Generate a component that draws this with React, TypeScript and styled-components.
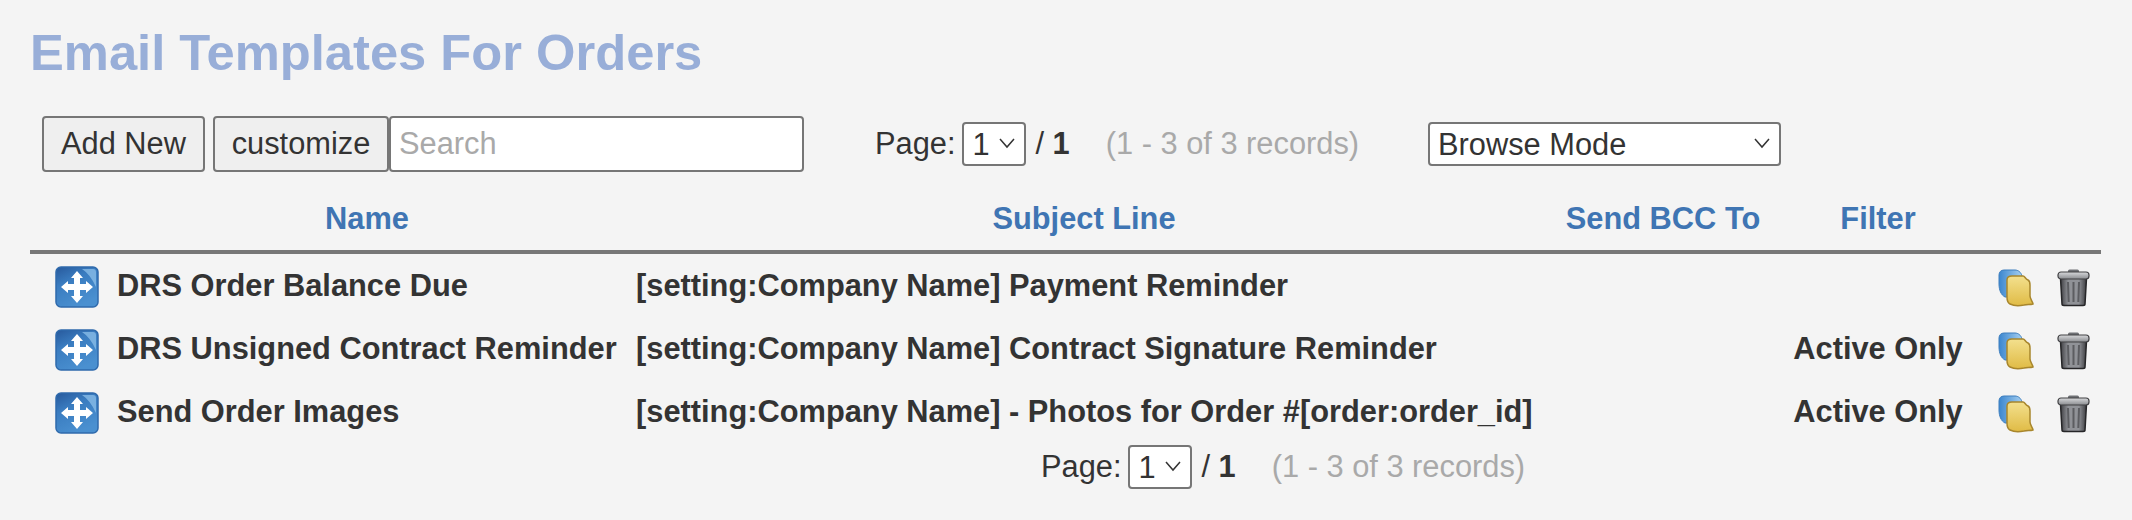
import { FC } from 'react';
import styled, { createGlobalStyle } from 'styled-components';

const GlobalStyle = createGlobalStyle`
    html, body {
        margin: 0;
        padding: 0;
        background: #f4f4f4;
    }
    body {
        font-family: "Liberation Sans", Arial, sans-serif;
        color: #333333;
    }
`;

const Page = styled.div`
    width: 2132px;
    height: 520px;
    box-sizing: border-box;
    padding: 0 31px 0 30px;
    overflow: hidden;
`;

const Title = styled.h1`
    margin: 0;
    padding-top: 24px;
    height: 92px;
    box-sizing: border-box;
    font-size: 50.7px;
    line-height: 58px;
    font-weight: 700;
    color: #98aed8;
`;

const Toolbar = styled.div`
    display: flex;
    align-items: center;
    height: 56px;
    padding-left: 12px;
    margin-top: 24px;
`;

const Button = styled.button<{ $width: number; $gap?: number }>`
    width: ${p => p.$width}px;
    height: 56px;
    margin-right: ${p => p.$gap ?? 0}px;
    padding: 0;
    box-sizing: border-box;
    background: #efefef;
    border: 2px solid #767676;
    border-radius: 4px;
    font-family: inherit;
    font-size: 30.8px;
    color: #333333;
`;

const SearchInput = styled.input`
    width: 415px;
    height: 56px;
    box-sizing: border-box;
    padding: 0 8px;
    background: #ffffff;
    border: 2px solid #767676;
    border-radius: 4px;
    font-family: inherit;
    font-size: 30.8px;
    color: #333333;
    &::placeholder {
        color: #a9a9a9;
        opacity: 1;
    }
`;

const Pager = styled.div<{ $left: number }>`
    display: flex;
    align-items: center;
    height: 44px;
    margin-left: ${p => p.$left}px;
    font-size: 30.8px;
`;

const TopPager = styled(Pager)`
    flex: none;
    width: 553px;
`;

const BottomPager = styled(Pager)`
    margin-top: 2px;
`;

const SelectBox = styled.div<{ $width: number }>`
    position: relative;
    width: ${p => p.$width}px;
    height: 44px;
    flex: none;
`;

const NativeSelect = styled.select`
    display: block;
    width: 100%;
    height: 100%;
    box-sizing: border-box;
    padding: 0 0 0 8px;
    appearance: none;
    background: #ffffff;
    border: 2px solid #767676;
    border-radius: 4px;
    font-family: inherit;
    font-size: 30.8px;
    color: #333333;
`;

const Chevron = styled.svg`
    position: absolute;
    right: 10px;
    top: 15px;
    width: 18px;
    height: 12px;
    pointer-events: none;
`;

const PageLabel = styled.span`
    margin-right: 7px;
`;

const PageTotal = styled.span`
    margin-left: 9px;
`;

const PageCount = styled.strong`
    font-weight: 700;
`;

const Records = styled.span`
    margin-left: 36px;
    color: #a9a9a9;
`;

const Table = styled.table`
    width: 2071px;
    margin-top: 17px;
    table-layout: fixed;
    border-collapse: collapse;
`;

const Column = styled.col<{ $width: number }>`
    width: ${p => p.$width}px;
`;

const HeadCell = styled.th`
    height: 63px;
    padding: 0 0 2px;
    box-sizing: border-box;
    border-bottom: 4px solid #777777;
    font-size: 30.8px;
    font-weight: 700;
    text-align: center;
    color: #3f75b3;
`;

const Cell = styled.td`
    height: 63px;
    padding: 0;
    font-size: 30.8px;
    font-weight: 700;
    white-space: nowrap;
    color: #333333;
`;

const SubjectCell = styled(Cell)`
    padding-left: 12px;
`;

const NameCell = styled(Cell)`
    padding-left: 7px;
`;

const FilterCell = styled(Cell)`
    text-align: center;
`;

const Icons = styled.div<{ $left: number; $top: number; $gap?: number }>`
    display: flex;
    align-items: center;
    padding: ${p => p.$top}px 0 0 ${p => p.$left}px;
    gap: ${p => p.$gap ?? 0}px;
`;

const IconSvg = styled.svg`
    display: block;
    flex: none;
    filter: blur(0.7px);
`;

const MoveIcon: FC<{ id: string }> = ({ id }) => (
    <IconSvg width="44" height="42" viewBox="0 0 44 42">
        <defs>
            <linearGradient id={`move-${id}`} x1="0" y1="0" x2="0.5" y2="1">
                <stop offset="0" stopColor="#27599c" />
                <stop offset="0.4" stopColor="#3a7cc0" />
                <stop offset="1" stopColor="#4a90d0" />
            </linearGradient>
        </defs>
        <rect x="1" y="1" width="42" height="40" rx="5" fill={`url(#move-${id})`} stroke="#2f6aac" strokeWidth="1.500" />
        <path d="M27 3h11a3 3 0 0 1 3 3v15q-6-13-14-18z" fill="#93c5ec" opacity="0.7" />
        <path
            d="M22 5l6 7h-3v6h6v-3l7 6-7 6v-3h-6v6h3l-6 7-6-7h3v-6h-6v3l-7-6 7-6v3h6v-6h-3z"
            fill="#ffffff"
        />
    </IconSvg>
);

const CopyIcon: FC<{ id: string }> = ({ id }) => (
    <IconSvg width="36" height="38" viewBox="0 0 36 38">
        <defs>
            <linearGradient id={`copy-b-${id}`} x1="0" y1="0" x2="1" y2="0">
                <stop offset="0" stopColor="#3b86cf" />
                <stop offset="1" stopColor="#a5cff0" />
            </linearGradient>
            <linearGradient id={`copy-y-${id}`} x1="0" y1="0" x2="0" y2="1">
                <stop offset="0" stopColor="#f3e08e" />
                <stop offset="1" stopColor="#e0bb45" />
            </linearGradient>
        </defs>
        <path
            d="M6 1h11c3 0 6 2 7 6v21H7c-4-2-6-7-6-13V6c0-3 2-5 5-5z"
            fill={`url(#copy-b-${id})`}
            stroke="#3f7fbe"
        />
        <path
            d="M9 11c0-3 2-4 5-4h11c2 0 2 3 5 4 2 1 2 3 2 5v11c0 3 3 6 3 8-3 1-6 0-9 1-5 1-10 1-14-1-2-1-3-4-3-7z"
            fill={`url(#copy-y-${id})`}
            stroke="#a8862c"
            strokeWidth="1.500"
        />
    </IconSvg>
);

const TrashIcon: FC<{ id: string }> = ({ id }) => (
    <IconSvg width="33" height="38" viewBox="0 0 33 38">
        <defs>
            <linearGradient id={`trash-${id}`} x1="0" y1="0" x2="1" y2="0">
                <stop offset="0" stopColor="#3f3f43" />
                <stop offset="0.3" stopColor="#909297" />
                <stop offset="0.7" stopColor="#909297" />
                <stop offset="1" stopColor="#3c3c40" />
            </linearGradient>
            <linearGradient id={`lid-${id}`} x1="0" y1="0" x2="0" y2="1">
                <stop offset="0" stopColor="#d8d9db" />
                <stop offset="1" stopColor="#8a8c90" />
            </linearGradient>
        </defs>
        <rect x="11" y="0.500" width="11" height="4" rx="1.500" fill="#6e7074" />
        <path d="M3.500 9h26l-1.500 26c0 1-1 1.500-2 1.500H7c-1 0-2-.5-2-1.500z" fill={`url(#trash-${id})`} stroke="#262628" strokeWidth="1.500" />
        <path d="M11 13l.7 20M16.500 13v20M22 13l-.7 20" stroke="#5c5d61" strokeWidth="2" fill="none" />
        <rect x="1" y="3" width="31" height="7" rx="3" fill={`url(#lid-${id})`} stroke="#404043" strokeWidth="1.200" />
    </IconSvg>
);

const ChevronDown: FC = () => (
    <Chevron viewBox="0 0 18 12">
        <path d="M2 2l7 8 7-8" fill="none" stroke="#333333" strokeWidth="1.500" />
    </Chevron>
);

const PageSelect: FC = () => (
    <SelectBox $width={64}>
        <NativeSelect defaultValue="1">
            <option value="1">1</option>
        </NativeSelect>
        <ChevronDown />
    </SelectBox>
);

const PagerContent: FC = () => (
    <>
        <PageLabel>Page:</PageLabel>
        <PageSelect />
        <PageTotal>/ <PageCount>1</PageCount></PageTotal>
        <Records>(1 - 3 of 3 records)</Records>
    </>
);

const rows = [
    { id: 'balance', name: 'DRS Order Balance Due', subject: '[setting:Company Name] Payment Reminder', filter: '' },
    { id: 'contract', name: 'DRS Unsigned Contract Reminder', subject: '[setting:Company Name] Contract Signature Reminder', filter: 'Active Only' },
    { id: 'images', name: 'Send Order Images', subject: '[setting:Company Name] - Photos for Order #[order:order_id]', filter: 'Active Only' },
];

const App: FC = () => (
    <Page>
        <GlobalStyle />
        <Title>Email Templates For Orders</Title>
        <Toolbar>
            <Button $width={163} $gap={8}>Add New</Button>
            <Button $width={176}>customize</Button>
            <SearchInput placeholder="Search" />
            <TopPager $left={71}>
                <PagerContent />
            </TopPager>
            <SelectBox $width={353}>
                <NativeSelect defaultValue="browse">
                    <option value="browse">Browse Mode</option>
                </NativeSelect>
                <ChevronDown />
            </SelectBox>
        </Toolbar>
        <Table>
            <colgroup>
                <Column $width={80} />
                <Column $width={514} />
                <Column $width={920} />
                <Column $width={238} />
                <Column $width={192} />
                <Column $width={127} />
            </colgroup>
            <thead>
                <tr>
                    <HeadCell />
                    <HeadCell>Name</HeadCell>
                    <HeadCell>Subject Line</HeadCell>
                    <HeadCell>Send BCC To</HeadCell>
                    <HeadCell>Filter</HeadCell>
                    <HeadCell />
                </tr>
            </thead>
            <tbody>
                {rows.map(row => (
                    <tr key={row.id}>
                        <Cell>
                            <Icons $left={25} $top={2}>
                                <MoveIcon id={row.id} />
                            </Icons>
                        </Cell>
                        <NameCell>{row.name}</NameCell>
                        <SubjectCell>{row.subject}</SubjectCell>
                        <Cell />
                        <FilterCell>{row.filter}</FilterCell>
                        <Cell>
                            <Icons $left={24} $top={4} $gap={23}>
                                <CopyIcon id={row.id} />
                                <TrashIcon id={row.id} />
                            </Icons>
                        </Cell>
                    </tr>
                ))}
            </tbody>
        </Table>
        <BottomPager $left={1011}>
            <PagerContent />
        </BottomPager>
    </Page>
);

export default App;
